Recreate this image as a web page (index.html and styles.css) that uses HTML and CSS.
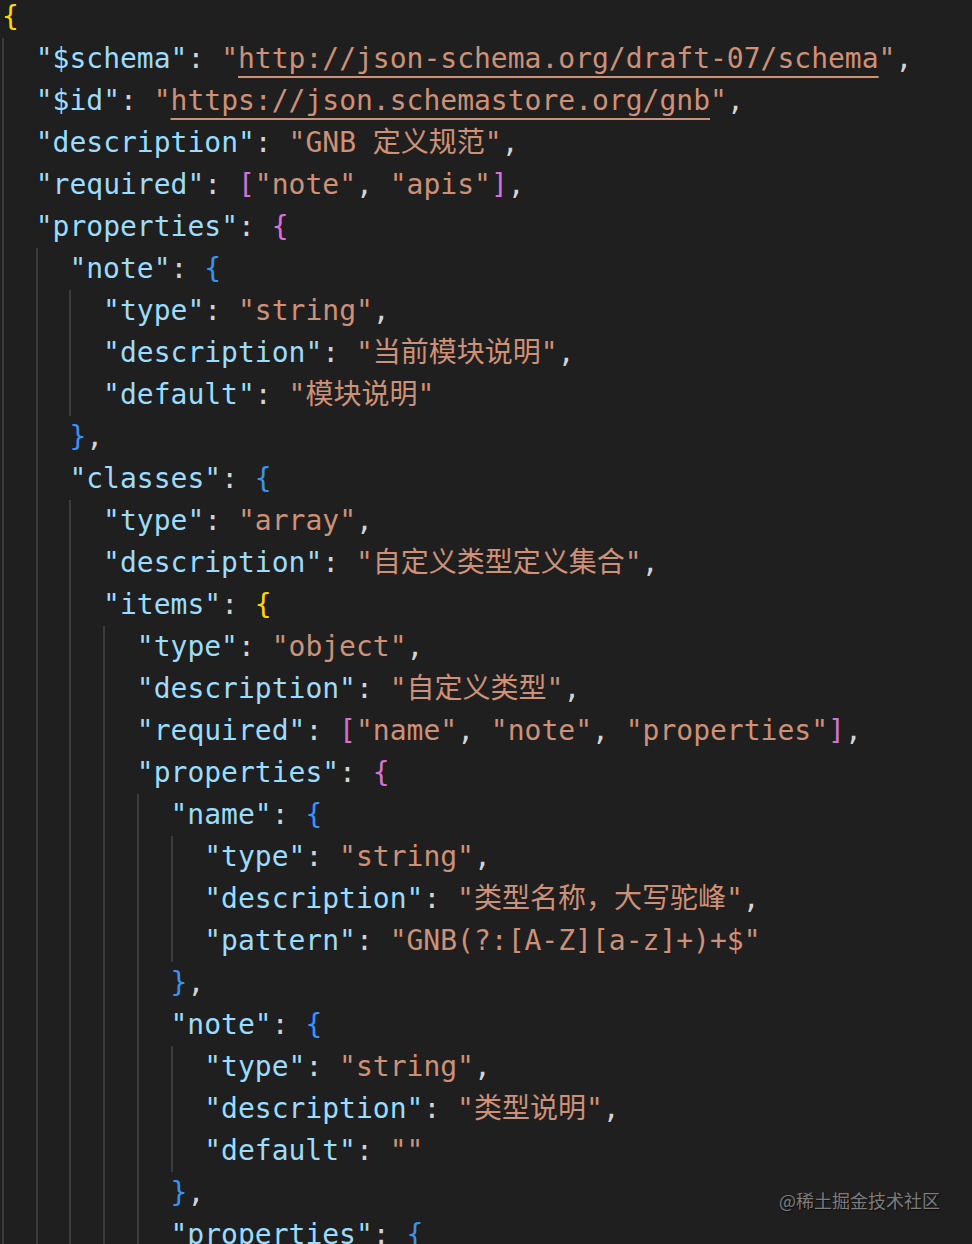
FILE: index.html
```html
<!DOCTYPE html>
<html lang="zh">
<head>
<meta charset="utf-8">
<title>gnb schema</title>
<link rel="stylesheet" href="styles.css">
</head>
<body>
<main class="editor">
  <div class="line"><span class="b1">{</span></div>
  <div class="line"><i class="g"></i><span class="k">"$schema"</span><span class="p">: </span><span class="s">"<u>http://json-schema.org/draft-07/schema</u>"</span><span class="p">,</span></div>
  <div class="line"><i class="g"></i><span class="k">"$id"</span><span class="p">: </span><span class="s">"<u>https://json.schemastore.org/gnb</u>"</span><span class="p">,</span></div>
  <div class="line"><i class="g"></i><span class="k">"description"</span><span class="p">: </span><span class="s">"GNB 定义规范"</span><span class="p">,</span></div>
  <div class="line"><i class="g"></i><span class="k">"required"</span><span class="p">: </span><span class="b2">[</span><span class="s">"note"</span><span class="p">, </span><span class="s">"apis"</span><span class="b2">]</span><span class="p">,</span></div>
  <div class="line"><i class="g"></i><span class="k">"properties"</span><span class="p">: </span><span class="b2">{</span></div>
  <div class="line"><i class="g"></i><i class="g"></i><span class="k">"note"</span><span class="p">: </span><span class="b3">{</span></div>
  <div class="line"><i class="g"></i><i class="g"></i><i class="g"></i><span class="k">"type"</span><span class="p">: </span><span class="s">"string"</span><span class="p">,</span></div>
  <div class="line"><i class="g"></i><i class="g"></i><i class="g"></i><span class="k">"description"</span><span class="p">: </span><span class="s">"当前模块说明"</span><span class="p">,</span></div>
  <div class="line"><i class="g"></i><i class="g"></i><i class="g"></i><span class="k">"default"</span><span class="p">: </span><span class="s">"模块说明"</span></div>
  <div class="line"><i class="g"></i><i class="g"></i><span class="b3">}</span><span class="p">,</span></div>
  <div class="line"><i class="g"></i><i class="g"></i><span class="k">"classes"</span><span class="p">: </span><span class="b3">{</span></div>
  <div class="line"><i class="g"></i><i class="g"></i><i class="g"></i><span class="k">"type"</span><span class="p">: </span><span class="s">"array"</span><span class="p">,</span></div>
  <div class="line"><i class="g"></i><i class="g"></i><i class="g"></i><span class="k">"description"</span><span class="p">: </span><span class="s">"自定义类型定义集合"</span><span class="p">,</span></div>
  <div class="line"><i class="g"></i><i class="g"></i><i class="g"></i><span class="k">"items"</span><span class="p">: </span><span class="b1">{</span></div>
  <div class="line"><i class="g"></i><i class="g"></i><i class="g"></i><i class="g"></i><span class="k">"type"</span><span class="p">: </span><span class="s">"object"</span><span class="p">,</span></div>
  <div class="line"><i class="g"></i><i class="g"></i><i class="g"></i><i class="g"></i><span class="k">"description"</span><span class="p">: </span><span class="s">"自定义类型"</span><span class="p">,</span></div>
  <div class="line"><i class="g"></i><i class="g"></i><i class="g"></i><i class="g"></i><span class="k">"required"</span><span class="p">: </span><span class="b2">[</span><span class="s">"name"</span><span class="p">, </span><span class="s">"note"</span><span class="p">, </span><span class="s">"properties"</span><span class="b2">]</span><span class="p">,</span></div>
  <div class="line"><i class="g"></i><i class="g"></i><i class="g"></i><i class="g"></i><span class="k">"properties"</span><span class="p">: </span><span class="b2">{</span></div>
  <div class="line"><i class="g"></i><i class="g"></i><i class="g"></i><i class="g"></i><i class="g"></i><span class="k">"name"</span><span class="p">: </span><span class="b3">{</span></div>
  <div class="line"><i class="g"></i><i class="g"></i><i class="g"></i><i class="g"></i><i class="g"></i><i class="g"></i><span class="k">"type"</span><span class="p">: </span><span class="s">"string"</span><span class="p">,</span></div>
  <div class="line"><i class="g"></i><i class="g"></i><i class="g"></i><i class="g"></i><i class="g"></i><i class="g"></i><span class="k">"description"</span><span class="p">: </span><span class="s">"类型名称，大写驼峰"</span><span class="p">,</span></div>
  <div class="line"><i class="g"></i><i class="g"></i><i class="g"></i><i class="g"></i><i class="g"></i><i class="g"></i><span class="k">"pattern"</span><span class="p">: </span><span class="s">"GNB(?:[A-Z][a-z]+)+$"</span></div>
  <div class="line"><i class="g"></i><i class="g"></i><i class="g"></i><i class="g"></i><i class="g"></i><span class="b3">}</span><span class="p">,</span></div>
  <div class="line"><i class="g"></i><i class="g"></i><i class="g"></i><i class="g"></i><i class="g"></i><span class="k">"note"</span><span class="p">: </span><span class="b3">{</span></div>
  <div class="line"><i class="g"></i><i class="g"></i><i class="g"></i><i class="g"></i><i class="g"></i><i class="g"></i><span class="k">"type"</span><span class="p">: </span><span class="s">"string"</span><span class="p">,</span></div>
  <div class="line"><i class="g"></i><i class="g"></i><i class="g"></i><i class="g"></i><i class="g"></i><i class="g"></i><span class="k">"description"</span><span class="p">: </span><span class="s">"类型说明"</span><span class="p">,</span></div>
  <div class="line"><i class="g"></i><i class="g"></i><i class="g"></i><i class="g"></i><i class="g"></i><i class="g"></i><span class="k">"default"</span><span class="p">: </span><span class="s">""</span></div>
  <div class="line"><i class="g"></i><i class="g"></i><i class="g"></i><i class="g"></i><i class="g"></i><span class="b3">}</span><span class="p">,</span></div>
  <div class="line"><i class="g"></i><i class="g"></i><i class="g"></i><i class="g"></i><i class="g"></i><span class="k">"properties"</span><span class="p">: </span><span class="b3">{</span></div>
</main>
<div class="watermark">@稀土掘金技术社区</div>
</body>
</html>
```

FILE: styles.css
```css
html, body {
  margin: 0;
  padding: 0;
  background: #1f1f1f;
  height: 1244px;
  overflow: hidden;
}

body {
  position: relative;
}

.editor {
  margin-top: -4px;
  padding-left: 2px;
  font-family: "DejaVu Sans Mono", "Noto Sans CJK SC", monospace;
  font-size: 28px;
  color: #d4d4d4;
}

.line {
  display: flex;
  align-items: stretch;
  height: 42px;
  line-height: 42px;
  white-space: pre;
}

.line span {
  white-space: pre;
}

.g {
  flex: 0 0 auto;
  width: 2ch;
  box-shadow: inset 2px 0 0 #3c3c3c;
}

.k { color: #9cdcfe; }
.s { color: #ce9178; }
.p { color: #d4d4d4; }
.b1 { color: #ffd700; }
.b2 { color: #da70d6; }
.b3 { color: #3794f5; }

.s u {
  text-decoration: underline;
  text-decoration-thickness: 2px;
  text-underline-offset: 8px;
}

.watermark {
  position: absolute;
  right: 32px;
  top: 1187px;
  font-family: "Noto Sans CJK SC", sans-serif;
  font-size: 18px;
  line-height: 26px;
  color: #7c7c7c;
  text-shadow: 1px 1px 1px #0d0d0d;
}
```
